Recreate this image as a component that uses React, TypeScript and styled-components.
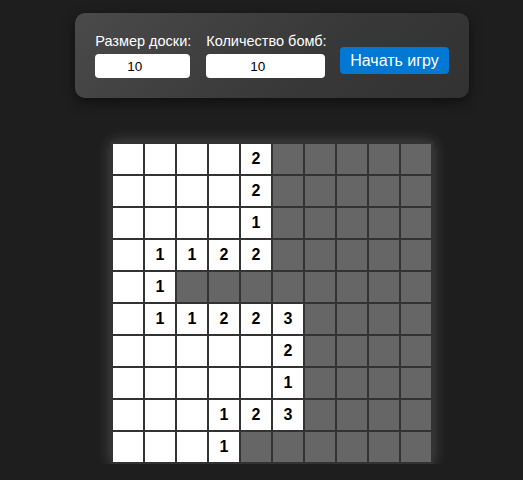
import React, { useState } from 'react';
import styled, { createGlobalStyle } from 'styled-components';

const GlobalStyle = createGlobalStyle`
	html, body {
		margin: 0;
		padding: 0;
		background: #1e1e1e;
		font-family: "Liberation Sans", Arial, sans-serif;
	}
`;

// '.' = opened empty, 'G' = closed, digits = opened with count
const BOARD = [
	'....2GGGGG',
	'....2GGGGG',
	'....1GGGGG',
	'.1122GGGGG',
	'.1GGGGGGGG',
	'.11223GGGG',
	'.....2GGGG',
	'.....1GGGG',
	'...123GGGG',
	'...1GGGGGG',
];

const Page = styled.div`
	width: 544px;
	display: flex;
	flex-direction: column;
	align-items: center;
	padding-top: 13px;
`;

const Controls = styled.div`
	display: flex;
	align-items: flex-end;
	gap: 16px;
	padding: 20px;
	border-radius: 10px;
	background: linear-gradient(135deg, #4a4a4a 0%, #383838 60%, #323232 100%);
	box-shadow: 0 4px 12px rgba(0, 0, 0, 0.5);
`;

const Field = styled.div<{ $width: number }>`
	display: flex;
	flex-direction: column;
	width: ${p => p.$width}px;
`;

const Label = styled.label`
	color: #ffffff;
	font-size: 14.5px;
	line-height: 16px;
	margin-bottom: 5px;
	white-space: nowrap;
`;

const NumberInput = styled.input`
	box-sizing: border-box;
	width: 100%;
	min-width: 0;
	height: 24px;
	border: none;
	border-radius: 4px;
	background: #ffffff;
	color: #000000;
	text-align: center;
	font-family: "Liberation Sans", Arial, sans-serif;
	font-size: 13.5px;
	outline: none;
	padding: 0 16px 0 0;
	-moz-appearance: textfield;

	&::-webkit-inner-spin-button,
	&::-webkit-outer-spin-button {
		-webkit-appearance: none;
		margin: 0;
	}
`;

const StartButton = styled.button`
	height: 27px;
	padding: 0 10px;
	margin-bottom: 4px;
	margin-left: -1px;
	border: none;
	border-radius: 4px;
	background: #0078d4;
	color: #ffffff;
	font-family: "Liberation Sans", Arial, sans-serif;
	font-size: 16px;
	white-space: nowrap;
	cursor: pointer;
`;

const Board = styled.div`
	margin-top: 44px;
	display: grid;
	grid-template-columns: repeat(10, 30px);
	grid-auto-rows: 30px;
	gap: 2px;
	padding: 2px;
	background: #333333;
	box-shadow: 0 0 14px rgba(255, 255, 255, 0.22);
`;

const Cell = styled.div<{ $open: boolean }>`
	display: flex;
	align-items: center;
	justify-content: center;
	background: ${p => (p.$open ? '#ffffff' : '#666666')};
	color: #000000;
	font-size: 16px;
	font-weight: bold;
	user-select: none;
`;

export default function App() {
	const [size, setSize] = useState('10');
	const [bombs, setBombs] = useState('10');

	return (
		<>
			<GlobalStyle />
			<Page>
				<Controls>
					<Field $width={95}>
						<Label>Размер доски:</Label>
						<NumberInput type="number" value={size} onChange={e => setSize(e.target.value)} />
					</Field>
					<Field $width={119}>
						<Label>Количество бомб:</Label>
						<NumberInput type="number" value={bombs} onChange={e => setBombs(e.target.value)} />
					</Field>
					<StartButton>Начать игру</StartButton>
				</Controls>
				<Board>
					{BOARD.map((row, r) =>
						row.split('').map((ch, c) => (
							<Cell key={`${r}-${c}`} $open={ch !== 'G'}>
								{ch !== 'G' && ch !== '.' ? ch : ''}
							</Cell>
						))
					)}
				</Board>
			</Page>
		</>
	);
}
